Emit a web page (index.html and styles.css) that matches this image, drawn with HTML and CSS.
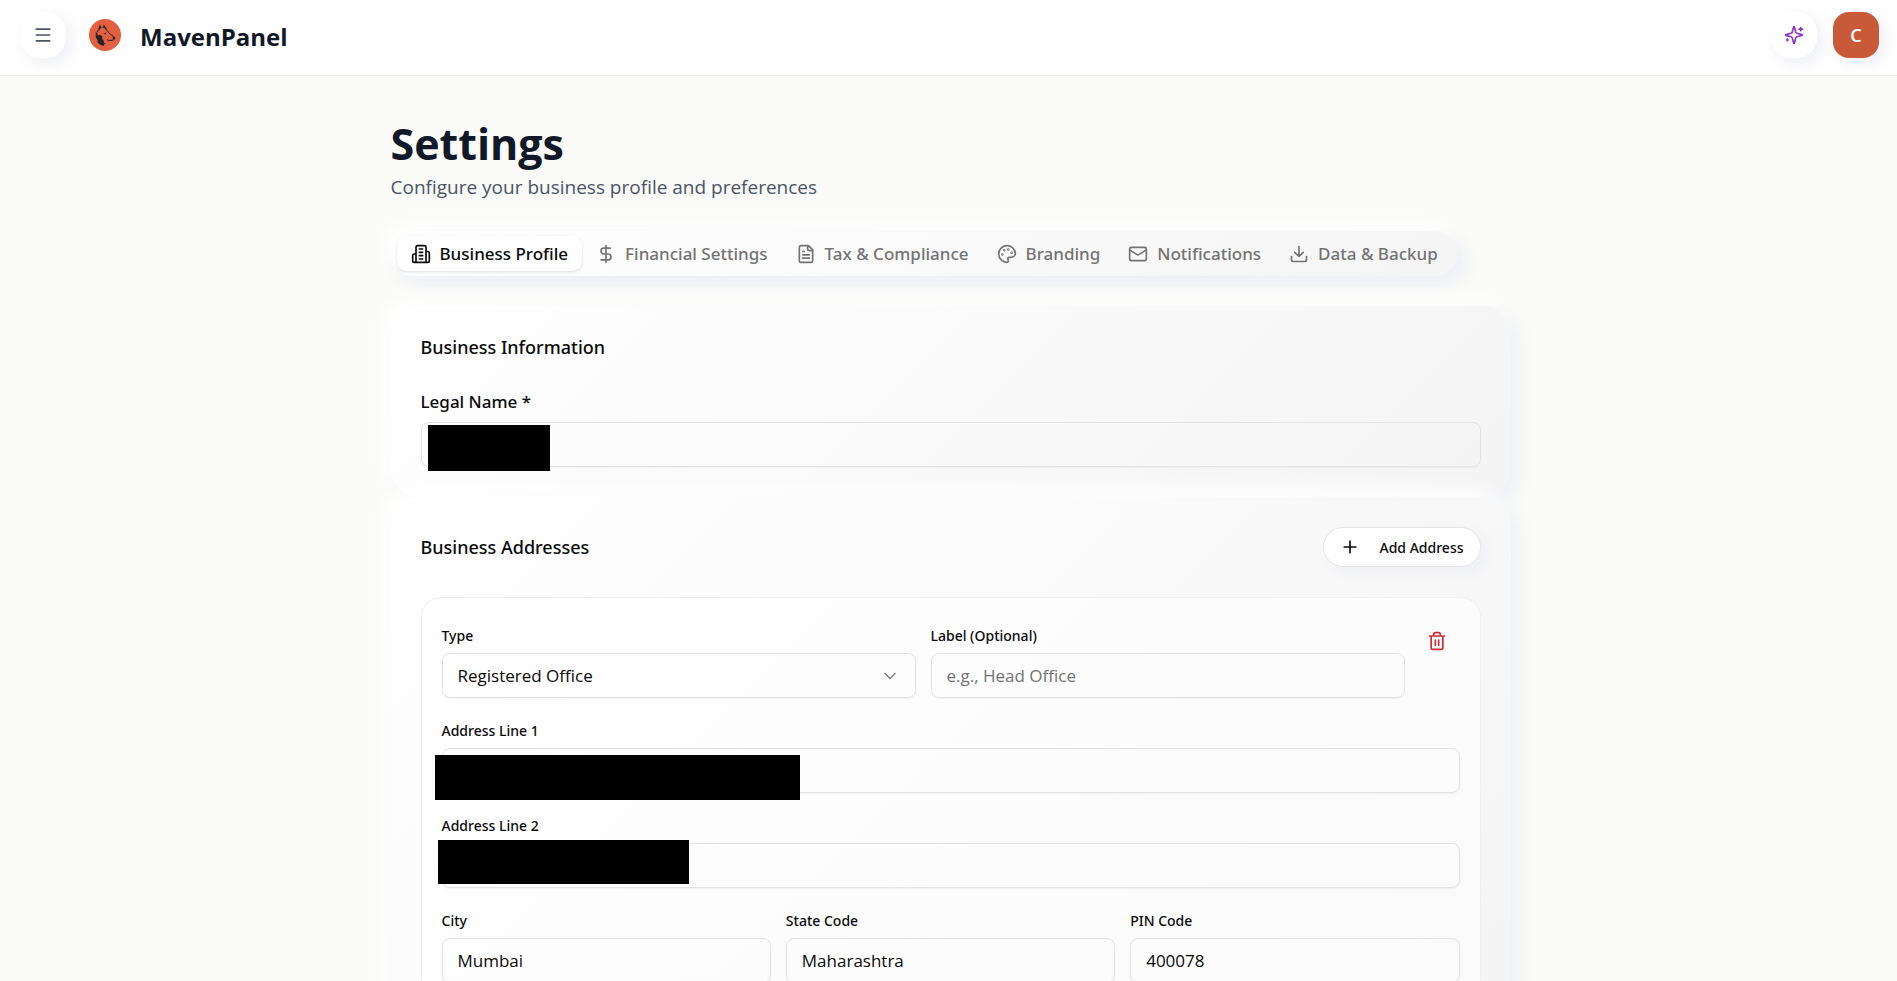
FILE: index.html
```html
<!DOCTYPE html>
<html lang="en">
<head>
<meta charset="utf-8">
<title>MavenPanel - Settings</title>
<meta name="viewport" content="width=device-width, initial-scale=1">
<link rel="stylesheet" href="styles.css">
</head>
<body>
<header class="topbar">
  <button class="icon-button" type="button" aria-label="Menu">
    <svg class="icon" viewBox="0 0 24 24"><path d="M4 5h16M4 12h16M4 19h16"/></svg>
  </button>
  <a class="brand" href="#">
    <svg class="logo" viewBox="0 0 32 32" aria-hidden="true">
      <circle cx="16" cy="16" r="16" fill="#e2603f"/>
      <path fill="#25232a" d="M9.200 10.500 10.800 5.600 12.800 9 11.300 9.500 10.200 11.500ZM13.600 9 14.800 5.600 18.200 10.500 17.300 11.500 15.200 8.800ZM8 11.500 10 11 8.500 14ZM6.800 13 8.500 14.500 8.800 16.500 11 15.800 13.500 17.500 13 20 14.500 21 14.800 23.500 17 25 14.800 25.300 15.200 27 11 25.800 8.200 22.800 8.800 21.500 6.800 18.500ZM14.600 14.400 17.500 13.500 16.500 15.600ZM23.500 18.500 25.500 17.700 26.500 19.600 24.800 21Z"/>
      <path fill="none" stroke="#25232a" stroke-width="1" d="M18 11.200 20.500 14.500 25.500 18.300M25 20.800 20.500 21.700 17.800 20.700"/>
    </svg>
    <span class="brand-name">MavenPanel</span>
  </a>
  <div class="topbar-actions">
    <button class="icon-button accent" type="button" aria-label="Assistant">
      <svg class="icon" viewBox="0 0 24 24"><path d="M9.937 15.500A2 2 0 0 0 8.500 14.063l-6.135-1.582a.5.5 0 0 1 0-.962L8.500 9.936A2 2 0 0 0 9.937 8.500l1.582-6.135a.5.5 0 0 1 .963 0L14.063 8.500A2 2 0 0 0 15.500 9.937l6.135 1.581a.5.5 0 0 1 0 .964L15.500 14.063a2 2 0 0 0-1.437 1.437l-1.582 6.135a.5.5 0 0 1-.963 0z"/><path d="M20 3v4M22 5h-4M4 17v2M5 18H3"/></svg>
    </button>
    <button class="avatar" type="button" aria-label="Account">C</button>
  </div>
</header>

<main class="page">
  <div class="content">
    <h1 class="page-title">Settings</h1>
    <p class="page-subtitle">Configure your business profile and preferences</p>

    <div class="tabs" role="tablist">
      <button class="tab active" type="button" role="tab" aria-selected="true">
        <svg class="icon" viewBox="0 0 24 24"><path d="M6 22V4a2 2 0 0 1 2-2h8a2 2 0 0 1 2 2v18ZM6 12H4a2 2 0 0 0-2 2v6a2 2 0 0 0 2 2h2M18 9h2a2 2 0 0 1 2 2v9a2 2 0 0 1-2 2h-2M10 6h4M10 10h4M10 14h4M10 18h4"/></svg>
        Business Profile
      </button>
      <button class="tab" type="button" role="tab">
        <svg class="icon" viewBox="0 0 24 24"><path d="M12 2v20M17 5H9.500a3.500 3.500 0 0 0 0 7h5a3.500 3.500 0 0 1 0 7H6"/></svg>
        Financial Settings
      </button>
      <button class="tab" type="button" role="tab">
        <svg class="icon" viewBox="0 0 24 24"><path d="M15 2H6a2 2 0 0 0-2 2v16a2 2 0 0 0 2 2h12a2 2 0 0 0 2-2V7ZM14 2v4a2 2 0 0 0 2 2h4M10 9H8M16 13H8M16 17H8"/></svg>
        Tax &amp; Compliance
      </button>
      <button class="tab" type="button" role="tab">
        <svg class="icon" viewBox="0 0 24 24"><path d="M12 22a10 10 0 1 1 10-11c0 3-2.500 5-5.500 5H14.500a1.700 1.700 0 0 0-1.300 2.800c.9 1.300.4 3.200-1.200 3.200Z"/><circle cx="13.500" cy="6.500" r=".5"/><circle cx="17.500" cy="10.500" r=".5"/><circle cx="8.500" cy="7.500" r=".5"/><circle cx="6.500" cy="12.500" r=".5"/></svg>
        Branding
      </button>
      <button class="tab" type="button" role="tab">
        <svg class="icon" viewBox="0 0 24 24"><rect x="2" y="4" width="20" height="16" rx="2"/><path d="m22 7-8.970 5.700a1.940 1.940 0 0 1-2.060 0L2 7"/></svg>
        Notifications
      </button>
      <button class="tab" type="button" role="tab">
        <svg class="icon" viewBox="0 0 24 24"><path d="M21 15v4a2 2 0 0 1-2 2H5a2 2 0 0 1-2-2v-4M7 10l5 5 5-5M12 15V3"/></svg>
        Data &amp; Backup
      </button>
    </div>

    <section class="card">
      <h2 class="card-title">Business Information</h2>
      <div class="field large">
        <label for="legal-name">Legal Name *</label>
        <div class="control">
          <input id="legal-name" type="text">
          <span class="mask mask-name"></span>
        </div>
      </div>
    </section>

    <section class="card">
      <div class="card-head">
        <h2 class="card-title">Business Addresses</h2>
        <button class="add-button" type="button">
          <svg class="icon" viewBox="0 0 24 24"><path d="M5 12h14M12 5v14"/></svg>
          Add Address
        </button>
      </div>
      <div class="address">
        <div class="address-top">
          <div class="field">
            <label for="type">Type</label>
            <div class="control">
              <select id="type"><option>Registered Office</option></select>
              <svg class="icon chevron" viewBox="0 0 24 24"><path d="m6 9 6 6 6-6"/></svg>
            </div>
          </div>
          <div class="field">
            <label for="label">Label (Optional)</label>
            <input id="label" type="text" placeholder="e.g., Head Office">
          </div>
          <button class="delete-button" type="button" aria-label="Delete address">
            <svg class="icon" viewBox="0 0 24 24"><path d="M3 6h18M19 6v14a2 2 0 0 1-2 2H7a2 2 0 0 1-2-2V6M8 6V4a2 2 0 0 1 2-2h4a2 2 0 0 1 2 2v2M10 11v6M14 11v6"/></svg>
          </button>
        </div>
        <div class="field">
          <label for="line1">Address Line 1</label>
          <div class="control">
            <input id="line1" type="text">
            <span class="mask mask-line1"></span>
          </div>
        </div>
        <div class="field">
          <label for="line2">Address Line 2</label>
          <div class="control">
            <input id="line2" type="text">
            <span class="mask mask-line2"></span>
          </div>
        </div>
        <div class="address-row">
          <div class="field">
            <label for="city">City</label>
            <input id="city" type="text" value="Mumbai">
          </div>
          <div class="field">
            <label for="state">State Code</label>
            <input id="state" type="text" value="Maharashtra">
          </div>
          <div class="field">
            <label for="pin">PIN Code</label>
            <input id="pin" type="text" value="400078">
          </div>
        </div>
      </div>
    </section>
  </div>
</main>
</body>
</html>
```
FILE: styles.css
```css
* {
  box-sizing: border-box;
}

html,
body {
  height: 100%;
}

body {
  margin: 0;
  display: flex;
  flex-direction: column;
  overflow: hidden;
  background: #fafaf8;
  color: #0a0a0a;
  font-family: "Open Sans", "Noto Sans", sans-serif;
  font-size: 16px;
}

button,
input,
select {
  font: inherit;
  color: inherit;
}

button {
  border: 0;
  padding: 0;
  background: none;
  cursor: pointer;
}

.icon {
  width: 20px;
  height: 20px;
  flex: none;
  fill: none;
  stroke: currentColor;
  stroke-width: 2;
  stroke-linecap: round;
  stroke-linejoin: round;
}

.topbar {
  flex: none;
  display: flex;
  align-items: center;
  height: 76px;
  padding: 0 18px 5px 20px;
  background: #fefefe;
  border-bottom: 1px solid #ececec;
}

.icon-button,
.avatar {
  display: grid;
  place-items: center;
  width: 46px;
  height: 46px;
  border-radius: 20px;
  background: #fff;
  color: #4b5563;
  box-shadow: 5px 5px 14px #eeeff5, -5px -5px 14px #fff;
}

.accent {
  color: #8b35c9;
}

.avatar {
  border-radius: 16px;
  background: #c85a3a;
  color: #fff;
  font-size: 18px;
  font-weight: 600;
}

.brand {
  display: flex;
  align-items: center;
  gap: 19px;
  margin-left: 23px;
  color: #111827;
  text-decoration: none;
}

.logo {
  width: 32px;
  height: 32px;
}

.brand-name {
  padding-top: 4px;
  font-size: 24px;
  line-height: 32px;
  font-weight: 700;
}

.topbar-actions {
  display: flex;
  gap: 16px;
  margin-left: auto;
}

.page {
  flex: 1;
  min-height: 0;
  overflow: hidden;
  padding: 43px 16px 0 20px;
}

.content {
  max-width: 1120px;
  margin: 0 auto;
}

.page-title {
  margin: 0;
  color: #111827;
  font-size: 43px;
  line-height: 50px;
  font-weight: 700;
}

.page-subtitle {
  margin: 0 0 26px;
  color: #4b5563;
  font-size: 19px;
  line-height: 36px;
}

.tabs {
  display: flex;
  width: fit-content;
  height: 45px;
  margin-bottom: 30px;
  padding: 5px 5px 5px 6px;
  border-radius: 23px;
  background: linear-gradient(135deg, #fff, #f5f5f5);
  box-shadow: 8px 8px 18px #edeff4, -8px -8px 18px #fff;
}

.tab,
.add-button,
.card-title,
.field label {
  font-family: "Noto Sans", "Open Sans", sans-serif;
  font-weight: 500;
}

.tab {
  display: flex;
  align-items: center;
  gap: 9px;
  padding: 0 14px;
  border-radius: 9px;
  color: #737373;
  font-size: 17px;
  white-space: nowrap;
}

.tab.active {
  background: #fff;
  color: #0a0a0a;
  box-shadow: 0 1px 3px #00000024;
}

.card {
  padding: 30px;
  border-radius: 28px;
  background: linear-gradient(135deg, #fff, #f4f4f4);
  box-shadow: 8px 8px 18px #eff1f5, -8px -8px 18px #fff;
}

.card-title {
  margin: 0;
  font-size: 18px;
  line-height: 22px;
}

.card-head {
  display: flex;
  align-items: center;
  justify-content: space-between;
  margin-bottom: 30px;
}

.field {
  min-width: 0;
}

.field label {
  display: block;
  margin-bottom: 7px;
  font-size: 14px;
  line-height: 20px;
}

.field.large {
  margin-top: 32px;
}

.field.large label {
  margin-bottom: 9px;
  font-size: 17px;
  line-height: 23px;
}

.control {
  position: relative;
}

input,
select {
  display: block;
  width: 100%;
  height: 45px;
  padding: 0 15px;
  border: 1px solid #e3e3e3;
  border-radius: 8px;
  outline: 0;
  appearance: none;
  background: transparent;
  font-size: 17px;
  box-shadow: 0 1px 2px #0000000d;
}

input::placeholder {
  color: #737373;
  opacity: 1;
}

.chevron {
  position: absolute;
  top: 13px;
  right: 16px;
  color: #858585;
}

.mask {
  position: absolute;
  background: #000;
}

.mask-name {
  top: 3px;
  left: 7px;
  width: 122px;
  height: 46px;
}

.mask-line1 {
  top: 7px;
  left: -7px;
  width: 365px;
  height: 45px;
}

.mask-line2 {
  top: -3px;
  left: -4px;
  width: 251px;
  height: 44px;
}

.add-button {
  display: flex;
  align-items: center;
  gap: 20px;
  height: 40px;
  padding: 0 16px;
  border: 1px solid #e5e5e5;
  border-radius: 20px;
  background: #fff;
  font-size: 14px;
  box-shadow: 5px 5px 14px #eeeff5;
}

.address {
  display: grid;
  gap: 23px;
  padding: 28px 20px 20px;
  border: 1px solid #f0f0f0;
  border-radius: 20px;
  background: linear-gradient(135deg, #fff, #fafafa);
}

.address-top {
  display: grid;
  grid-template-columns: 1fr 1fr 40px;
  gap: 15px;
}

.address-row {
  display: grid;
  grid-template-columns: repeat(3, 1fr);
  gap: 15px;
}

.delete-button {
  align-self: start;
  display: grid;
  place-items: center;
  width: 34px;
  height: 30px;
  color: #c52f35;
}
```
